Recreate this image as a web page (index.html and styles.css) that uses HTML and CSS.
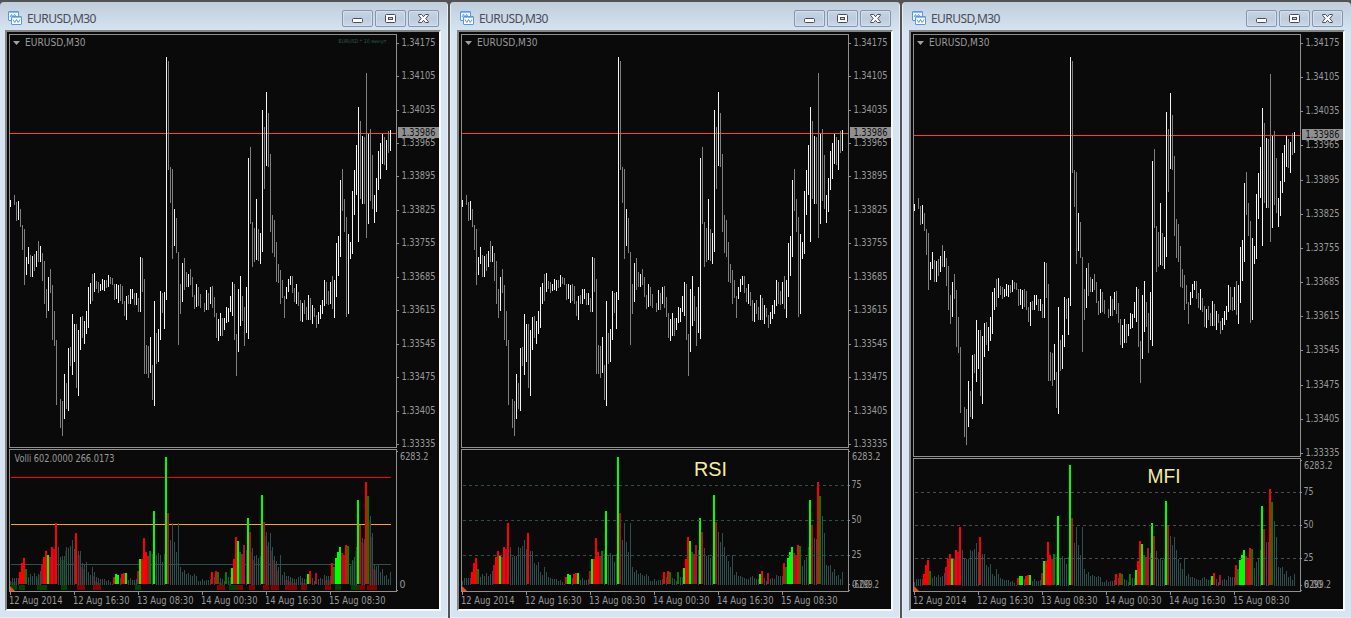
FILE: index.html
```html
<!DOCTYPE html>
<html lang="en">
<head>
<meta charset="utf-8">
<title>EURUSD,M30</title>
<link rel="stylesheet" href="styles.css">
</head>
<body>
<svg class="defs" aria-hidden="true">
  <symbol id="app-icon" viewBox="0 0 14 14">
    <rect x=".5" y=".5" width="10" height="9" rx=".5" fill="#f2f8ff" stroke="#5795ef"/>
    <path d="M2 6l1.5-2.500 1.500 2.500 1.500-2.500 1.500 2" fill="none" stroke="#5795ef"/>
    <path d="M1 1.500h9" stroke="#8fbaf6"/>
    <rect x="3.500" y="5.500" width="10" height="8" rx=".5" fill="#fff" stroke="#5795ef"/>
    <path d="M4 6.500h9" stroke="#8fbaf6"/>
    <path d="M5 8.500l1.800 3 1.700-3 1.700 3 1.800-3" fill="none" stroke="#5795ef"/>
  </symbol>
  <symbol id="btn-min" viewBox="0 0 12 11">
    <rect x=".5" y="5.500" width="10" height="4" rx="1" fill="#fff" stroke="#4a4d5a"/>
  </symbol>
  <symbol id="btn-max" viewBox="0 0 12 11">
    <rect x=".5" y="1.500" width="10" height="8" rx="1" fill="#fff" stroke="#4a4d5a"/>
    <rect x="3.500" y="4.500" width="4" height="2" fill="#c5d2e4" stroke="#4a4d5a"/>
  </symbol>
  <symbol id="btn-close" viewBox="0 0 12 11">
    <path d="M.6 1.500h3L5.500 3.700l1.900-2.200h3v.8L7.800 5.500l2.600 3.200v.8h-3L5.500 7.300 3.600 9.500h-3v-.8l2.600-3.200L.6 2.300z" fill="#fff" stroke="#4a4d5a" stroke-linejoin="round"/>
  </symbol>
</svg>
<main class="desk">
  <section class="window first">
    <header class="titlebar"><svg class="app"><use href="#app-icon"/></svg><span class="title">EURUSD,M30</span>
      <div class="buttons"><button><svg><use href="#btn-min"/></svg></button><button><svg><use href="#btn-max"/></svg></button><button><svg><use href="#btn-close"/></svg></button></div></header>
    <div class="client"><svg class="chart" data-kind="volli" viewBox="7 32 432 577"></svg></div>
  </section>
  <section class="window">
    <header class="titlebar"><svg class="app"><use href="#app-icon"/></svg><span class="title">EURUSD,M30</span>
      <div class="buttons"><button><svg><use href="#btn-min"/></svg></button><button><svg><use href="#btn-max"/></svg></button><button><svg><use href="#btn-close"/></svg></button></div></header>
    <div class="client"><svg class="chart" data-kind="rsi" viewBox="7 32 432 577"></svg></div>
  </section>
  <section class="window last">
    <header class="titlebar"><svg class="app"><use href="#app-icon"/></svg><span class="title">EURUSD,M30</span>
      <div class="buttons"><button><svg><use href="#btn-min"/></svg></button><button><svg><use href="#btn-max"/></svg></button><button><svg><use href="#btn-close"/></svg></button></div></header>
    <div class="client"><svg class="chart" data-kind="mfi" viewBox="7 32 432 577"></svg></div>
  </section>
</main>
<script src="chart.js"></script>
</body>
</html>
```
FILE: styles.css
```css
* { box-sizing: border-box; }
body { margin: 0; overflow: hidden; background: #e9eaec; }
.defs { position: absolute; width: 0; height: 0; }
.desk {
  display: flex;
  gap: 2px;
  width: 1351px;
  height: 618px;
  padding-top: 2px;
  background: #535353;
}
.window {
  display: flex;
  flex-direction: column;
  width: 450px;
  padding: 0 7px 0 6px;
  background: linear-gradient(#c0cddb 0, #d6e3f1 29px, #d7e4f2 30px);
  border: 0 solid #e8eef5;
  border-width: 0 1px 1px;
  border-radius: 4px 4px 0 0;
}
.window.first { width: 448px; padding: 0 6px 0 5px; border-left: 0; }
.window.last { width: 449px; padding-right: 6px; border-right: 0; }
.titlebar { display: flex; align-items: flex-start; width: 434px; height: 28px; padding-left: 3px; }
.app { width: 14px; height: 14px; margin-top: 9px; }
.title {
  flex: 1;
  margin: 8px 0 0 5px;
  font: 12px/17px "Noto Sans", "Open Sans", sans-serif;
  letter-spacing: -0.55px;
  color: #484d57;
}
.buttons { display: flex; gap: 2px; margin: 8px 0 0 0; }
.buttons button {
  display: flex;
  align-items: center;
  justify-content: center;
  width: 31px;
  height: 17px;
  padding: 0;
  border: 1px solid #8494b2;
  border-radius: 2px;
  background: linear-gradient(#c7d4e3, #bdcbdc 50%, #c9d7e6);
  box-shadow: inset 0 0 0 1px #d3dfeb;
}
.buttons svg { width: 12px; height: 11px; margin-left: 1px; }
.client {
  width: 436px;
  height: 581px;
  border: 2px solid;
  border-color: #858585 #f7f9fb #f7f9fb #858585;
  background: #0a0a0a;
}
.chart { display: block; width: 432px; height: 577px; }
.chart rect, .chart line { shape-rendering: crispEdges; }
.chart text { font: 10px "DejaVu Sans Condensed", "DejaVu Sans", sans-serif; fill: #999; }
.chart .quote { fill: #101010; }
.chart .big { font: 20px "Liberation Sans", Arial, sans-serif; fill: #f3eca4; }
.chart .tiny { font-size: 5px; fill: #2f5a55; }
```
FILE: chart.js
```js
// Candle runs: first x, y origin, then "high low tone" in thirds of a pixel.
const RUNS = [
  [10, 180, '60 81 w,,45 75 g,66 123 g,63 120 w,87 141 g,135 210 g,147 315 g,231 285 w,201 252 w,225 291 g,228 291 w,222 273 g,213 261 w,183 246 g,198 246 w,219 303 g,243 372 g,327 414 g,291 393 w,267 339 g,315 480 g,393 498 g,480 675 g,,657 744 g,663 768 g,582 717 w,609 687 g,504 693 w,501 558 g,402 585 w,432 546 w,432 624 g,450 648 w,411 510 w,408 474 g,423 492 w,393 462 w,321 444 w,309 372 w,282 363 g,279 336 w,303 327 g,306 339 g,312 333 w,297 330 w,300 333 w,300 324 g,285 321 w,291 312 g,294 315 g,312 360 g,312 357 w,315 369 w,312 363 g,318 372 g,363 408 g,348 420 w,345 372 g'],
  [130, 40, '747 792 w,747 777 w,759 795 g,759 795 w,774 816 g,651 816 w,654 756 g,717 1002 g,915 1002 g,918 1014 g,891 999 w,975 1080 g,783 1098 w,879 972 g,867 966 w,753 900 w,759 819 g,756 867 w,51 780 w,63 390 g,381 489 g,387 657 g,507 618 w,534 639 g,636 915 g,732 822 g,669 786 w,654 750 g,696 741 g,702 741 w,687 735 g,711 771 g,765 807 g,732 801 w,741 798 g,762 804 g,,789 816 g,750 810 w,759 810 g,741 792 w,738 804 g,771 831 g,819 894 g,837 903 w,819 888 w,834 888 g,834 870 w,801 849 w,804 846 w,768 816 w,726 828 w,732 900 g,882 1008 g,747 936 w,708 858 w,768 843 g,801 918 g,741 879 w'],
  [248, 80, '234 777 w,201 432 g,426 561 g,444 546 g,357 540 w,447 543 g,459 552 w,90 516 w,141 327 g,36 258 w,99 261 g,222 456 g,405 519 g,420 531 g,486 606 g,552 609 g,570 672 g,600 654 g,648 714 g,621 657 w,597 636 w,588 615 w,588 639 g,624 666 g,612 672 w,636 678 g,660 723 g,669 726 w,660 702 g,681 720 g,645 720 w,654 720 g,675 732 w,684 711 g,705 744 g,696 732 w,675 717 w,660 702 w,600 678 w,606 672 g,633 675 g,606 672 w,588 687 g,600 714 w,489 651 w,468 588 w,300 531 w,267 393 g,357 456 g,411 711 g,462 702 w,486 537 w,333 522 w,270 405 w,195 345 w,81 486 w,123 357 g,168 372 w,171 372 g,-21 474 g,162 432 w,147 363 g,225 387 g,345 429 w,294 396 w,213 330 w,189 297 w,162 252 w,171 255 g,180 270 w,153 219 g,150 213 w']
];
// Volume tops, thirds of a pixel below y=445; the letter picks the colour.
const VOLUME = ('408 399 399 399 399 R381 R354 R339 D372 396 387 393 384 393 387 378 C360 R336 R318 G330 C336 R306 C312 R234 306 336 333 333 306 309 303 285 312 R264 318 318 354 360 351 381 390 366 381 396 399 402 402 402 408 405 411 417 R396 G387 G390 399 R387 R384 G384 405 399 405 405 402 C378 G342 R342 R279 R321 C333 D318 327 G198 330 324 330 351 327 G36 C204 285 234 291 321 234 366 381 375 387 384 390 393 387 393 408 408 402 408 405 405 402 R381 396 R378 D381 399 402 408 D381 396 396 ' +
  'G369 R342 R276 G288 D321 C327 C300 315 G219 C261 309 333 330 339 333 G150 C231 261 291 264 306 333 348 366 330 390 381 393 393 396 399 402 402 396 393 399 402 402 G387 R378 399 408 C384 402 399 402 390 393 393 393 R354 D366 G339 G321 G306 C324 C330 R300 D303 363 345 336 306 G165 C240 279 282 R111 D153 213 264 360 363 360 381 372 393 390 402 381').split(' ');
const TONE = { R: '#ff0000', C: '#b0102e', G: '#00ff00', D: '#008000' };
// Signal strip: start x, end x, side.
const STRIP = [[11,17,'g'],[19,25,'g'],[37,47,'g'],[61,67,'g'],[77,85,'r'],[93,101,'r'],[135,141,'g'],[217,225,'r'],[229,237,'g'],[237,243,'r'],[249,255,'r'],[263,269,'r'],[271,279,'r'],[285,297,'r'],[301,307,'r'],[325,331,'r'],[335,341,'g'],[351,359,'g'],[359,365,'r'],[367,377,'r']];
const PRICES = ['1.34175','1.34105','1.34035','1.33965','1.33895','1.33825','1.33755','1.33685','1.33615','1.33545','1.33475','1.33405','1.33335'];
const PRICE_Y = [43, 76, 110, 143, 176, 210, 243, 277, 310, 344, 377, 411, 444];
const PRICE_Y_MFI = [43, 77, 111, 145, 180, 214, 248, 282, 316, 350, 385, 419, 453];
const TIMES = ['12 Aug 2014','12 Aug 16:30','13 Aug 08:30','14 Aug 00:30','14 Aug 16:30','15 Aug 08:30'];
const GRAY = '#909090';

function draw(svg) {
  const kind = svg.dataset.kind;
  const mfi = kind === 'mfi';
  const out = [];
  const rect = (x, y, w, h, c) => out.push(`<rect x="${x}" y="${y}" width="${w}" height="${h}" fill="${c}"/>`);
  const text = (x, y, s, len, cls = '') => out.push(`<text x="${x}" y="${y}" class="${cls}" textLength="${len}" lengthAdjust="spacingAndGlyphs">${s}</text>`);
  const frame = (y1, y2) => {
    rect(9, y1, 388, 1, GRAY); rect(9, y2, 388, 1, GRAY);
    rect(9, y1, 1, y2 - y1, GRAY); rect(396, y1, 1, y2 - y1, GRAY);
  };
  const scale = mfi ? 410 / 401 : 1;
  const py = y => Math.round(43 + (y - 43) * scale);
  const split = mfi ? 456 : 447;

  rect(10, mfi ? 135 : 133, 386, 1, '#ff4500');
  for (const [x0, y0, list] of RUNS) {
    list.split(',').forEach((item, i) => {
      if (!item) return;
      const [hi, lo, tone] = item.split(' ');
      const top = py(y0 + hi / 3);
      rect(x0 + 2 * i, top, 1, py(y0 + lo / 3) - top, tone === 'w' ? '#f4f4f4' : '#808080');
    });
  }
  frame(34, split);
  frame(split + 2, 591);

  if (kind === 'volli') {
    rect(11, 477, 380, 1, '#ff0000');
    rect(11, 524, 380, 1, '#ffa500');
    rect(11, 564, 380, 1, '#2f4f4f');
  }
  const base = mfi ? 585 : 584;
  const vs = mfi ? 120 / 127 : 1;
  const bars = VOLUME.map((v, i) => {
    const c = TONE[v[0]];
    const h = 584 - (445 + (c ? v.slice(1) : v) / 3);
    return { x: 10 + 2 * i, top: Math.round(base - h * vs), c };
  });
  if (kind === 'volli') {
    for (const [a, b, side] of STRIP) {
      for (const bar of bars) {
        if (bar.x > a && bar.x <= b && !bar.c && bar.top + 4 < 584)
          rect(bar.x - 1, bar.top + 4, 2, 581 - bar.top, side === 'g' ? '#083408' : '#5c1014');
      }
      rect(a, 585, b - a, 5, side === 'g' ? '#004000' : '#800000');
    }
  }
  for (const b of bars) {
    if (b.c) rect(b.x - 1, b.top, 2, base - b.top, b.c);
    else rect(b.x, b.top, 1, base + 1 - b.top, '#2f4f4f');
  }
  if (kind !== 'volli') {
    (mfi ? [492, 525, 558] : [485, 520, 555]).forEach((y, i) => {
      out.push(`<line x1="11" x2="396" y1="${y + .5}" y2="${y + .5}" stroke="${mfi ? '#4c4c4c' : '#2f4f4f'}" stroke-dasharray="3 3"/>`);
      rect(397, y, 1, 1, GRAY);
      text(399.5, y + 3, [75, 50, 25][i], 10);
    });
    text(243 + (mfi ? .5 : -1), mfi ? 483 : 476, mfi ? 'MFI' : 'RSI', 33, 'big');
    text(400, 588, mfi ? '6299.2' : '-6299.2', 27);
    text(400, 588, '0.00', 18);
    rect(397, base, 1, 1, GRAY);
  } else {
    text(14.5, 462, 'Volli 602.0000 266.0173', 100);
    text(338.5, 42.5, 'EURUSD * 10 минут', 48, 'tiny');
    text(399.5, 588, '0', 6);
  }
  text(400, split + 13, '6283.2', 28.5);
  rect(397, split + 4, 1, 1, GRAY);
  rect(397, 590, 1, 1, GRAY);

  PRICES.forEach((p, i) => {
    const y = (mfi ? PRICE_Y_MFI : PRICE_Y)[i];
    rect(397, y, 2, 1, GRAY);
    text(401.5, y + 3, p, 34);
  });
  rect(398, mfi ? 129 : 127, 41, 11, GRAY);
  text(401.5, mfi ? 138 : 136, '1.33986', 34, 'quote');
  TIMES.forEach((t, i) => {
    rect(10 + 64 * i, 592, 1, 3, GRAY);
    text(9 + 64 * i, 604, t, i ? 56.5 : 53.5);
  });
  out.push(`<path d="M13 41h7l-3.5 4z" fill="#a0a0a0"/><path d="M10 586v5h5z" fill="#ff4500"/>`);
  text(25, 46, 'EURUSD,M30', 60.5);
  svg.innerHTML = out.join('');
}
document.querySelectorAll('.chart').forEach(draw);
```
